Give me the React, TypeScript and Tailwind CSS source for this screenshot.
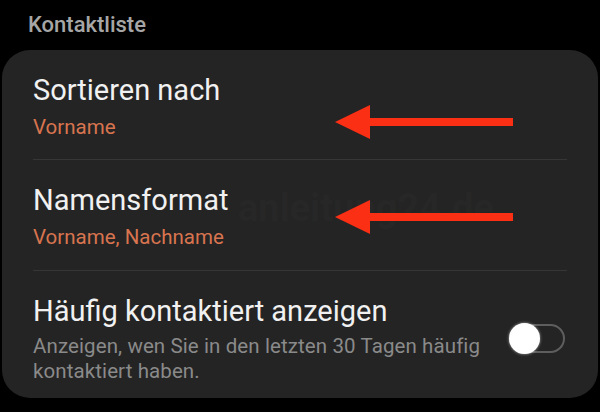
const Arrow = ({ top }: { top: number }) => (
  <svg
    className="absolute left-[333px] h-[36px] w-[182px]"
    style={{ top }}
    viewBox="0 0 182 36"
    fill="#fb2f14">
    <polygon points="2,18 37,1 37,35" />
    <rect x="34" y="14" width="146" height="8" />
  </svg>
)

const Toggle = () => (
  <div className="relative h-[31px] w-[58px] shrink-0">
    <div className="absolute right-[2px] top-[1px] h-[29px] w-[52px] rounded-full border-2 border-[#5e5e5e]" />
    <div className="absolute left-0 top-0 h-[31px] w-[31px] rounded-full bg-white shadow-[0_0_3px_rgba(255,255,255,0.6)]" />
  </div>
)

export default function App() {
  return (
    <div
      className="relative h-[412px] w-[600px] overflow-hidden bg-black"
      style={{ fontFamily: 'Roboto, "Liberation Sans", sans-serif' }}>
      <div className="flex h-[50px] items-start pl-[28px] pt-[8px] text-[22px] font-medium text-[#a6a6a6]">
        Kontaktliste
      </div>

      <div className="mx-[2px] flex flex-col rounded-[28px] bg-[#242424] px-[31px]">
        <div className="flex flex-col gap-[5px] pb-[18px] pt-[22px]">
          <div className="text-[29px] leading-[36px] text-[#f1f1f1]">Sortieren nach</div>
          <div className="text-[20.5px] leading-[28px] text-[#d8744f]">Vorname</div>
        </div>
        <div className="h-px bg-[#363636]" />

        <div className="relative flex flex-col gap-[5px] pb-[19px] pt-[22px]">
          <div className="absolute left-[205px] top-[26px] text-[38px] font-bold leading-[44px] text-[#272727]">
            anleitung24.de
          </div>
          <div className="relative text-[29px] leading-[36px] text-[#f1f1f1]">Namensformat</div>
          <div className="relative text-[20.5px] leading-[28px] text-[#d8744f]">Vorname, Nachname</div>
        </div>
        <div className="h-px bg-[#363636]" />

        <div className="flex items-center justify-between pb-[14px] pt-[22px]">
          <div className="flex flex-col gap-[5px]">
            <div className="text-[29px] leading-[36px] text-[#f1f1f1]">Häufig kontaktiert anzeigen</div>
            <div className="w-[470px] text-[20.5px] leading-[25px] tracking-[0.1px] text-[#8a8a8a]">
              Anzeigen, wen Sie in den letzten 30 Tagen häufig kontaktiert haben.
            </div>
          </div>
          <Toggle />
        </div>
      </div>

      <Arrow top={104} />
      <Arrow top={199} />
    </div>
  )
}
